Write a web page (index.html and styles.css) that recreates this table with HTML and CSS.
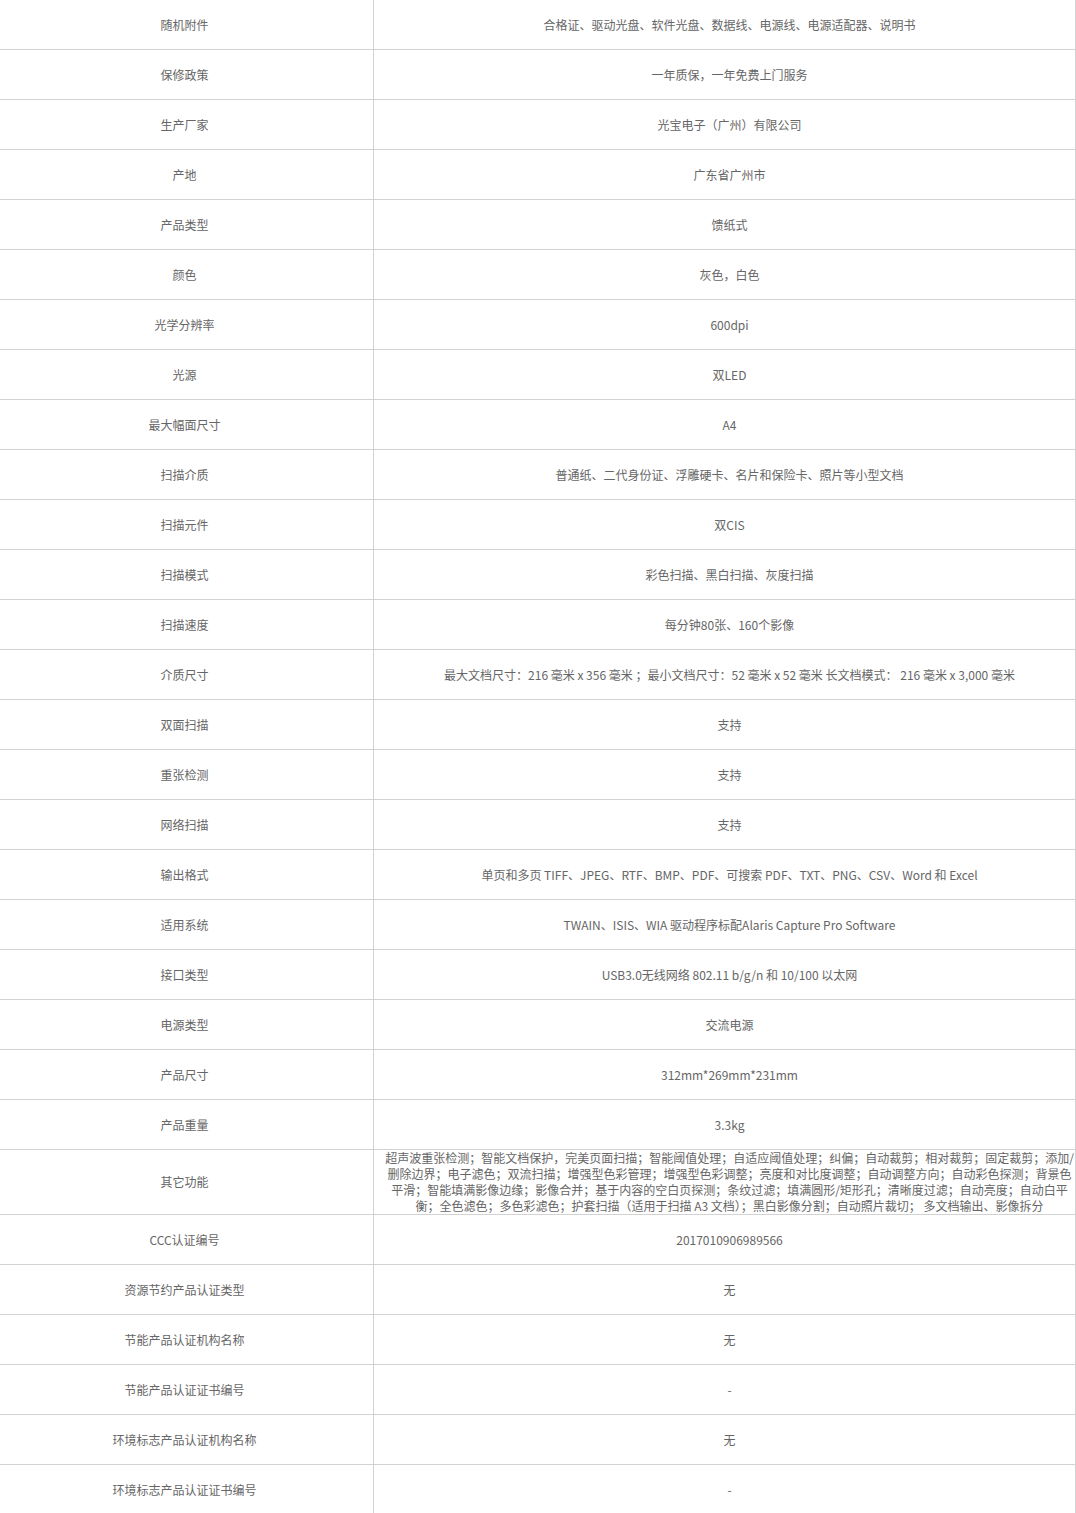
FILE: index.html
```html
<!DOCTYPE html>
<html lang="zh-CN">
<head>
<meta charset="utf-8">
<title>参数</title>
<link rel="stylesheet" href="styles.css">
</head>
<body>
<table class="spec">
<tbody>
<tr><td class="k">随机附件</td><td class="v">合格证、驱动光盘、软件光盘、数据线、电源线、电源适配器、说明书</td></tr>
<tr><td class="k">保修政策</td><td class="v">一年质保，一年免费上门服务</td></tr>
<tr><td class="k">生产厂家</td><td class="v">光宝电子（广州）有限公司</td></tr>
<tr><td class="k">产地</td><td class="v">广东省广州市</td></tr>
<tr><td class="k">产品类型</td><td class="v">馈纸式</td></tr>
<tr><td class="k">颜色</td><td class="v">灰色，白色</td></tr>
<tr><td class="k">光学分辨率</td><td class="v">600dpi</td></tr>
<tr><td class="k">光源</td><td class="v">双LED</td></tr>
<tr><td class="k">最大幅面尺寸</td><td class="v">A4</td></tr>
<tr><td class="k">扫描介质</td><td class="v">普通纸、二代身份证、浮雕硬卡、名片和保险卡、照片等小型文档</td></tr>
<tr><td class="k">扫描元件</td><td class="v">双CIS</td></tr>
<tr><td class="k">扫描模式</td><td class="v">彩色扫描、黑白扫描、灰度扫描</td></tr>
<tr><td class="k">扫描速度</td><td class="v">每分钟80张、160个影像</td></tr>
<tr><td class="k">介质尺寸</td><td class="v">最大文档尺寸：216 毫米 x 356 毫米 ；最小文档尺寸：52 毫米 x 52 毫米 长文档模式： 216 毫米 x 3,000 毫米</td></tr>
<tr><td class="k">双面扫描</td><td class="v">支持</td></tr>
<tr><td class="k">重张检测</td><td class="v">支持</td></tr>
<tr><td class="k">网络扫描</td><td class="v">支持</td></tr>
<tr><td class="k">输出格式</td><td class="v">单页和多页 TIFF、JPEG、RTF、BMP、PDF、可搜索 PDF、TXT、PNG、CSV、Word 和 Excel</td></tr>
<tr><td class="k">适用系统</td><td class="v">TWAIN、ISIS、WIA 驱动程序标配Alaris Capture Pro Software</td></tr>
<tr><td class="k">接口类型</td><td class="v">USB3.0无线网络 802.11 b/g/n 和 10/100 以太网</td></tr>
<tr><td class="k">电源类型</td><td class="v">交流电源</td></tr>
<tr><td class="k">产品尺寸</td><td class="v">312mm*269mm*231mm</td></tr>
<tr><td class="k">产品重量</td><td class="v">3.3kg</td></tr>
<tr class="tall"><td class="k">其它功能</td><td class="v">超声波重张检测；智能文档保护，完美页面扫描；智能阈值处理；自适应阈值处理；纠偏；自动裁剪；相对裁剪；固定裁剪；添加/删除边界；电子滤色；双流扫描；增强型色彩管理；增强型色彩调整；亮度和对比度调整；自动调整方向；自动彩色探测；背景色平滑；智能填满影像边缘；影像合并；基于内容的空白页探测；条纹过滤；填满圆形/矩形孔；清晰度过滤；自动亮度；自动白平衡；全色滤色；多色彩滤色；护套扫描（适用于扫描 A3 文档）；黑白影像分割；自动照片裁切； 多文档输出、影像拆分</td></tr>
<tr><td class="k">CCC认证编号</td><td class="v">2017010906989566</td></tr>
<tr><td class="k">资源节约产品认证类型</td><td class="v">无</td></tr>
<tr><td class="k">节能产品认证机构名称</td><td class="v">无</td></tr>
<tr><td class="k">节能产品认证证书编号</td><td class="v">-</td></tr>
<tr><td class="k">环境标志产品认证机构名称</td><td class="v">无</td></tr>
<tr><td class="k">环境标志产品认证证书编号</td><td class="v">-</td></tr>
</tbody>
</table>
</body>
</html>
```
FILE: styles.css
```css
html, body {
  margin: 0;
  padding: 0;
  background: #fff;
}

.spec {
  width: 1076px;
  border-collapse: separate;
  border-spacing: 0;
  table-layout: fixed;
  font-family: "Noto Sans CJK SC", "Microsoft YaHei", sans-serif;
  font-size: 12px;
  line-height: 16px;
  color: #666;
}

.spec td {
  box-sizing: border-box;
  height: 50px;
  text-align: center;
  vertical-align: middle;
  border-right: 1px solid #d2d2d2;
  border-bottom: 1px solid #d2d2d2;
}

.spec td.k {
  width: 374px;
  padding: 0 4px 0 0;
}

.spec td.v {
  width: 702px;
  padding: 0 0 0 10px;
}

.spec tr.tall td {
  height: 65px;
}
```
